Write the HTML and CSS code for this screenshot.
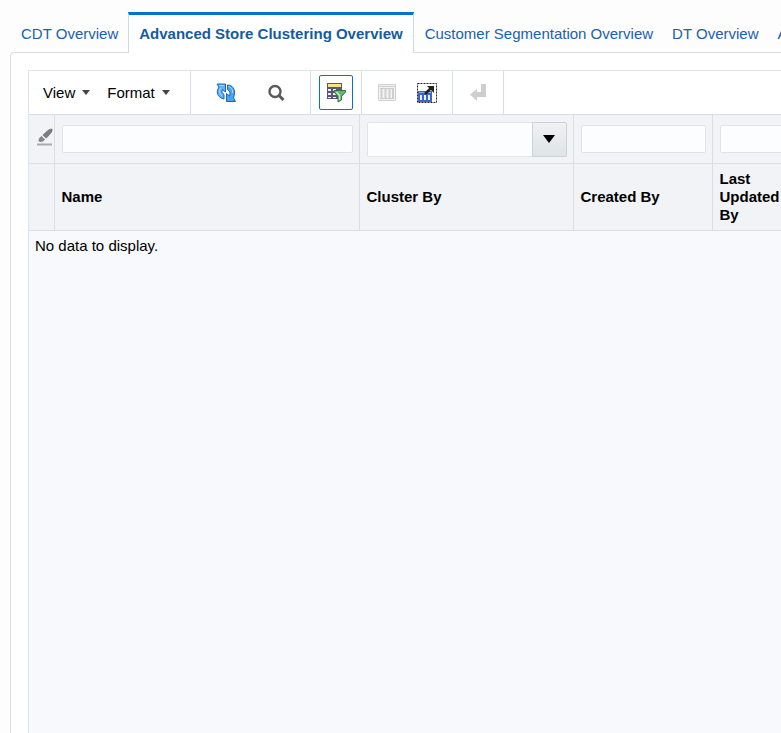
FILE: index.html
```html
<!DOCTYPE html>
<html lang="en">
<head>
<meta charset="utf-8">
<title>Advanced Store Clustering Overview</title>
<link rel="stylesheet" href="styles.css">
</head>
<body>
<nav class="tabs">
<a href="#" class="tab">CDT Overview</a>
<a href="#" class="tab active">Advanced Store Clustering Overview</a>
<a href="#" class="tab">Customer Segmentation Overview</a>
<a href="#" class="tab">DT Overview</a>
<a href="#" class="tab">A</a>
</nav>
<main class="panel">
<div class="grid">
<div class="toolbar">
<div class="group menus">
<button type="button" class="menu">View<span class="caret"></span></button>
<button type="button" class="menu">Format<span class="caret"></span></button>
</div>
<div class="group actions">
<button type="button" class="icon" aria-label="Refresh">
<svg width="20" height="20" viewBox="0 0 20 20">
<path d="M1 1H9.500V9L6.500 6.500C5.500 8.500 6 10.500 8 11.500V16C3 15 .5 11 1.500 7L3 4Z" fill="#5fb4f2" stroke="#1c62ba"/>
<path d="M11.500 2C16.500 2 19 6 18.500 11L17.500 15L19.500 18.500H10.500V10.500L13.500 13C14.500 10.500 14 7.500 11.500 6.500Z" fill="#4ba3ee" stroke="#1c62ba"/>
<path d="M3.500 2.500H8M4.500 5C3 8 3.500 11 6 13M12.500 3.500C15.500 4 17 7 16.500 10" fill="none" stroke="#a8dafc"/>
</svg>
</button>
<button type="button" class="icon" aria-label="Search">
<svg width="20" height="20" viewBox="0 0 20 20"><circle cx="9" cy="8.500" r="5.500" fill="none" stroke="#5a5a5a" stroke-width="2.400"/><path d="M13 12.500L17.500 17" stroke="#5a5a5a" stroke-width="3"/></svg>
</button>
</div>
<div class="group single">
<button type="button" class="icon pressed" aria-label="Query By Example" aria-pressed="true">
<svg width="20" height="20" viewBox="0 0 20 20">
<path d="M1 0H16V16H1Z" fill="#5b5679"/>
<path d="M2 1H15V4H2Z" fill="#f5e77d"/>
<path d="M2 6H5V8H2ZM7 6H10V8H7ZM2 10H5V12H2ZM7 10H10V12H7ZM2 14H5V15H2ZM7 14H10V15H7Z" fill="#eeeef8"/>
<path d="M8 7.500H19.500V9L15.500 13.500V17L12 19V13.500L8 9Z" fill="#68b078" stroke="#28783e"/>
<path d="M10.500 9L13.500 12.500V17" fill="none" stroke="#c5ecc9" stroke-width="1.500"/>
</svg>
</button>
</div>
<div class="group pair">
<button type="button" class="icon" aria-label="Freeze" disabled>
<svg width="20" height="20" viewBox="0 0 20 20"><path d="M1.500 1.500H18.500V17.500H1.500Z" fill="#f4f4f4" stroke="#d0d0d0"/><path d="M2 3.500H18M3 5.500H17M3 15.500H17" stroke="#cdcdcd"/><path d="M4.500 6V15M8.500 6V15M12.500 6V15M16 6V15" stroke="#cfcfcf" stroke-width="2"/></svg>
</button>
<button type="button" class="icon" aria-label="Detach">
<svg width="20" height="20" viewBox="0 0 20 20">
<path d="M.5 .5H19.500V19.500H.5Z" fill="none" stroke="#222" stroke-dasharray="2 1"/>
<path d="M1 8H15V19H1Z" fill="#3d65c8"/><path d="M3 12H5V17H3ZM7 12H9V17H7ZM11 12H13V17H11Z" fill="#e8f1ff"/><path d="M2 9.500H14" stroke="#85a9ee"/>
<path d="M8 11L14 5" stroke="#222" stroke-width="2.500"/><path d="M10 3H17V10Z" fill="#222"/>
</svg>
</button>
</div>
<div class="group single last">
<button type="button" class="icon" aria-label="Wrap" disabled>
<svg width="20" height="20" viewBox="0 0 20 20"><path d="M13 1H18V14H9V18L2 11.500L9 6V9H13Z" fill="#cecece"/></svg>
</button>
</div>
</div>
<table class="data">
<colgroup><col class="col-tool"><col class="col-name"><col class="col-cluster"><col class="col-created"><col class="col-updated"></colgroup>
<thead>
<tr class="filters">
<td class="tool">
<button type="button" class="clear" aria-label="Clear filters">
<svg width="18" height="18" viewBox="0 0 18 18"><path d="M6.500 7L12 2C14 .5 17 0 16.500 2C16.500 4 14 7 10 10.500Z" fill="#7b7d80"/><path d="M5.500 8L9 11.500L7 13.500C5 14.500 2 14 2.500 12C2.500 10.500 4.500 9 5.500 8Z" fill="#85878a"/><path d="M1 16.500H16" stroke="#aaa" stroke-width="2"/></svg>
</button>
</td>
<td><input type="text" class="filter" aria-label="Name"></td>
<td>
<div class="combo">
<select class="choice" aria-label="Cluster By"><option></option></select>
<span class="drop"></span>
</div>
</td>
<td><input type="text" class="filter" aria-label="Created By"></td>
<td><input type="text" class="filter" aria-label="Last Updated By"></td>
</tr>
<tr class="heads">
<td></td>
<th scope="col">Name</th>
<th scope="col">Cluster By</th>
<th scope="col">Created By</th>
<th scope="col">Last Updated By</th>
</tr>
</thead>
</table>
<p class="empty">No data to display.</p>
</div>
</main>
</body>
</html>
```
FILE: styles.css
```css
* {box-sizing:border-box;}
body {
	margin:0;
	min-height:100vh;
	display:flex;
	flex-direction:column;
	overflow:hidden;
	background:#fdfdfe;
	color:#000;
	font:15px/18px "Liberation Sans", Arial, sans-serif;
}
button, input, select {font:inherit;color:inherit;}
button {border:0;padding:0;background:none;}

/* tabs */
.tabs {display:flex;padding:12px 0 0 10px;margin-bottom:-1px;white-space:nowrap;z-index:1;}
.tab {
	height:41px;
	padding:10px 8px 0 11px;
	border-top:3px solid transparent;
	color:#1a60ae;
	text-decoration:none;
	flex:none;
}
.tab.active {
	padding:10px 10px 0;
	margin-left:2px;
	border:1px solid #d0dae0;
	border-top:3px solid #0572ce;
	border-bottom:0;
	background:#fff;
	color:#145c9e;
	font-weight:bold;
}

/* page area */
.panel {
	flex:1;
	display:flex;
	margin-left:10px;
	padding:17px 0 0 17px;
	border:1px solid #d6dfe3;
	border-width:1px 0 0 1px;
	border-radius:4px 0 0 0;
	background:#fff;
}
.grid {
	flex:1;
	min-width:0;
	overflow:hidden;
	border:1px solid #dfe4e7;
	border-width:1px 0 0 1px;
	background:#f7f9fc;
}

/* toolbar */
.toolbar {display:flex;height:43px;background:#fff;}
.group {display:flex;align-items:center;border-right:1px solid #d6dfe6;}
.menus {gap:17px;padding:0 20px 0 14px;}
.menu {display:flex;align-items:center;gap:7px;}
.caret {border:4px solid transparent;border-top:5px solid #444;border-bottom:0;}
.actions {gap:16px;padding:0 17px 0 18px;}
.pair {gap:6px;padding:0 8px;}
.single {padding:0 8px;}
.icon {
	display:flex;
	align-items:center;
	justify-content:center;
	width:34px;
	height:35px;
	border:1px solid transparent;
	border-radius:2px;
}
.icon.pressed {border-color:#0572ce;}

/* table */
.data {width:763px;table-layout:fixed;border-collapse:collapse;}
.col-tool {width:25px;}
.col-name {width:305px;}
.col-cluster {width:214px;}
.col-created {width:139px;}
.col-updated {width:80px;}
.data td, .data th {
	padding:0 6px 0 7px;
	border:1px solid #d6dfe6;
	border-left:0;
	background:#f1f3f7;
	text-align:left;
}
.data .tool {padding:0 0 0 7px;}
.filters {height:49px;}
.heads {height:67px;}
.clear {display:block;}
.filter {
	display:block;
	width:100%;
	height:28px;
	border:1px solid #dfe4e7;
	border-radius:2px;
	background:#fcfdfe;
}
.combo {position:relative;height:35px;}
.choice {
	appearance:none;
	display:block;
	width:100%;
	height:100%;
	padding:0 40px 0 6px;
	border:1px solid #dfe4e7;
	border-radius:2px;
	background:#fcfdfe;
}
.drop {
	position:absolute;
	top:0;
	right:0;
	bottom:0;
	width:35px;
	display:flex;
	align-items:center;
	justify-content:center;
	border:1px solid #c9d3da;
	border-radius:0 2px 2px 0;
	background:linear-gradient(#eff1f3, #e0e4e7);
	pointer-events:none;
}
.drop::after {content:"";border:6px solid transparent;border-top:8px solid #000;border-bottom:0;}
.empty {margin:0;padding:6px;}
```
